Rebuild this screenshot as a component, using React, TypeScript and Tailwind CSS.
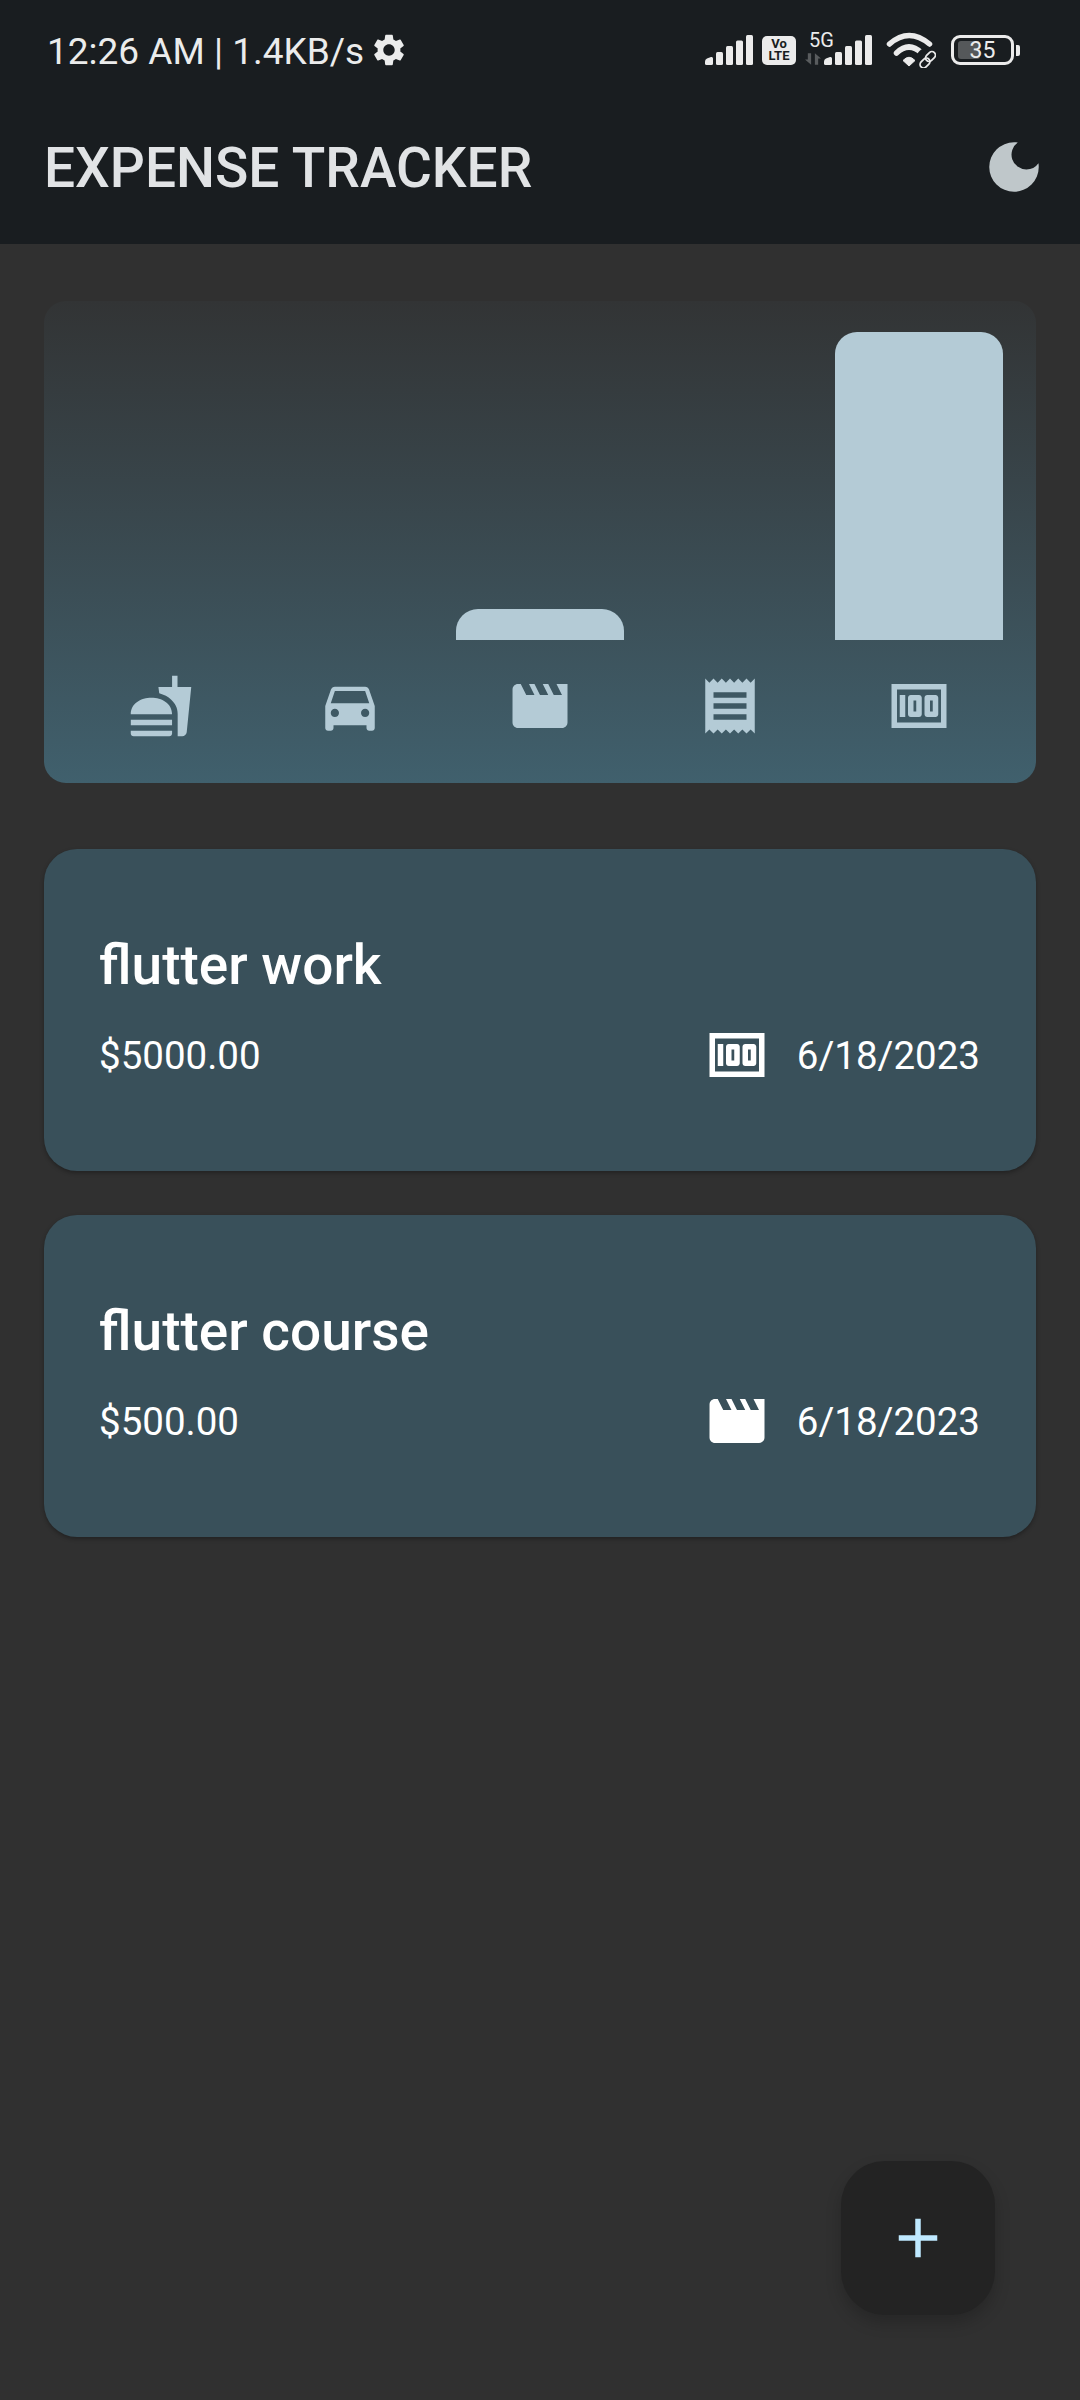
import { MdAdd, MdDarkMode, MdFastfood, MdMoney, MdMovie, MdReceipt, MdSettings } from "react-icons/md";
import type { IconType } from "react-icons";

function CarIcon({ size }: { size: number }) {
  return (
    <svg width={size} height={size} viewBox="0 0 24 24" fill="currentColor">
      <path d="M18.92 6.01C18.72 5.42 18.16 5 17.5 5h-11c-.66 0-1.21.42-1.42 1.01L3 12v8c0 .55.45 1 1 1h1c.55 0 1-.45 1-1v-1h12v1c0 .55.45 1 1 1h1c.55 0 1-.45 1-1v-8l-2.08-5.99zM6.5 16c-.83 0-1.5-.67-1.5-1.5S5.67 13 6.5 13s1.5.67 1.5 1.5S7.33 16 6.5 16zm11 0c-.83 0-1.5-.67-1.5-1.5s.67-1.5 1.5-1.5 1.5.67 1.5 1.5-.67 1.5-1.5 1.5zM5 11l1.5-4.5h11L19 11H5z" />
    </svg>
  );
}

const categories: { icon: IconType | typeof CarIcon; amount: number }[] = [
  { icon: MdFastfood, amount: 0 },
  { icon: CarIcon, amount: 0 },
  { icon: MdMovie, amount: 500 },
  { icon: MdReceipt, amount: 0 },
  { icon: MdMoney, amount: 5000 },
];

const expenses = [
  { title: "flutter work", amount: "$5000.00", icon: MdMoney, date: "6/18/2023" },
  { title: "flutter course", amount: "$500.00", icon: MdMovie, date: "6/18/2023" },
];

const total = categories.reduce((sum, c) => sum + c.amount, 0);

function Signal() {
  return (
    <svg width="48" height="30" viewBox="0 0 48 30" fill="#ebebeb">
      <path d="M0 26.5 Q0 24.5 2 23.5 L6 22 Q8 21.5 8 23.5 V28.5 Q8 30 6.5 30 H1.5 Q0 30 0 28.5 Z" />
      <rect x="11" y="17" width="7" height="13" rx="1.5" />
      <rect x="21" y="11" width="7" height="19" rx="1.5" />
      <rect x="31" y="5.5" width="7" height="24.5" rx="1.5" />
      <rect x="41" y="0" width="7" height="30" rx="1.5" />
    </svg>
  );
}

function Wifi() {
  return (
    <svg width="50" height="36" viewBox="0 0 50 36">
      <g fill="none" stroke="#ebebeb" strokeWidth="5.5" strokeLinecap="round">
        <path d="M3.5 12 Q23 -5 43.5 12" />
        <path d="M10.5 21 Q23 9 35.5 21" />
      </g>
      <path d="M17 28.5 Q23 22 29 28.5 L23 34 Z" fill="#ebebeb" stroke="#ebebeb" strokeWidth="1" strokeLinejoin="round" />
      <circle cx="41" cy="27" r="11" fill="#191d20" />
      <g fill="none" stroke="#ebebeb" strokeWidth="1.8">
        <rect x="33.5" y="27.5" width="11" height="7" rx="3.5" transform="rotate(-45 39 31)" />
        <rect x="39" y="21" width="11" height="7" rx="3.5" transform="rotate(-45 44.5 24.5)" />
      </g>
    </svg>
  );
}

function StatusBar() {
  return (
    <div className="flex h-[90px] items-center justify-between pt-[10px] pl-[47px] pr-[60px] text-[#ebecec]">
      <div className="flex items-center gap-[6px]">
        <span className="mt-[3px] text-[37px] leading-none">12:26 AM | 1.4KB/s</span>
        <MdSettings size={38} />
      </div>
      <div className="flex items-center">
        <Signal />
        <div className="ml-[9px] flex h-[29px] w-[34px] flex-col items-center justify-center rounded-[5px] bg-[#ebebeb] text-[13px] leading-[12px] font-bold text-[#191d20]">
          <span>Vo</span>
          <span>LTE</span>
        </div>
        <div className="relative ml-[9px] flex h-[30px] w-[67px] items-end justify-between">
          <span className="absolute top-[-5px] left-[4px] text-[20px] leading-[20px]">5G</span>
          <svg width="17" height="12" viewBox="0 0 17 12" fill="#595c5e">
            <path d="M3 0 H6.5 V12 L0 6.5 H3 Z" />
            <path d="M10.5 0 L17 5.5 H14 V12 H10.5 Z" />
          </svg>
          <div className="ml-[3px] h-[30px]">
            <Signal />
          </div>
        </div>
        <div className="ml-[14px]">
          <Wifi />
        </div>
        <div className="ml-[15px] flex items-center gap-[2px]">
          <div className="relative flex h-[30px] w-[63px] items-center justify-center rounded-[9px] border-[3px] border-[#ebebeb]">
            <div className="absolute top-[3px] bottom-[3px] left-[4px] w-[22px] rounded-[3px] bg-[#55585a]" />
            <span className="relative text-[23px] leading-none">35</span>
          </div>
          <div className="h-[11px] w-[4px] rounded-r-[2px] bg-[#ebebeb]" />
        </div>
      </div>
    </div>
  );
}

function Chart() {
  return (
    <div className="mx-[44px] mt-[57px] rounded-[22px] bg-gradient-to-b from-[#323435] to-[#40606d] px-[22px] pb-[44px]">
      <div className="flex h-[339px] items-end">
        {categories.map((c, i) => (
          <div key={i} className="flex flex-1 justify-center">
            <div
              className="w-[168px] rounded-t-[22px] bg-[#b4cbd6]"
              style={{ height: `${(c.amount / total) * 339}px` }}
            />
          </div>
        ))}
      </div>
      <div className="flex pt-[33px]">
        {categories.map((c, i) => (
          <div key={i} className="flex flex-1 justify-center text-[#b4cbd6]">
            <c.icon size={66} />
          </div>
        ))}
      </div>
    </div>
  );
}

function ExpenseCard({ title, amount, icon: Icon, date }: (typeof expenses)[number]) {
  return (
    <div className="flex h-[322px] flex-col justify-center gap-[25px] rounded-[33px] bg-[#39505a] pl-[55px] pr-[56px] text-white shadow-[0_2px_4px_rgba(0,0,0,0.3)]">
      <h2 className="text-[55px] leading-[64px] font-medium">{title}</h2>
      <div className="flex items-center justify-between">
        <span className="mt-[3px] text-[38.5px]">{amount}</span>
        <div className="flex items-center gap-[27px]">
          <Icon size={66} />
          <span className="mt-[3px] text-[38.5px]">{date}</span>
        </div>
      </div>
    </div>
  );
}

export default function App() {
  return (
    <div className="relative h-[2400px] overflow-hidden bg-[#303030] font-[Roboto,sans-serif]">
      <header className="h-[244px] bg-[#191d20]">
        <StatusBar />
        <div className="flex h-[154px] items-center justify-between pl-[44px] pr-[33px]">
          <h1 className="mt-[3px] text-[55px] font-medium text-[#e1e3e5]">EXPENSE TRACKER</h1>
          <MdDarkMode size={66} className="text-[#bfc7ca]" />
        </div>
      </header>
      <Chart />
      <div className="mx-[44px] mt-[66px] flex flex-col gap-[44px]">
        {expenses.map((e) => (
          <ExpenseCard key={e.title} {...e} />
        ))}
      </div>
      <button className="absolute right-[85px] bottom-[85px] flex h-[154px] w-[154px] items-center justify-center rounded-[44px] bg-[#232323] text-[#bfe9ff] shadow-[0_8px_16px_rgba(0,0,0,0.2)]">
        <MdAdd size={66} />
      </button>
    </div>
  );
}
